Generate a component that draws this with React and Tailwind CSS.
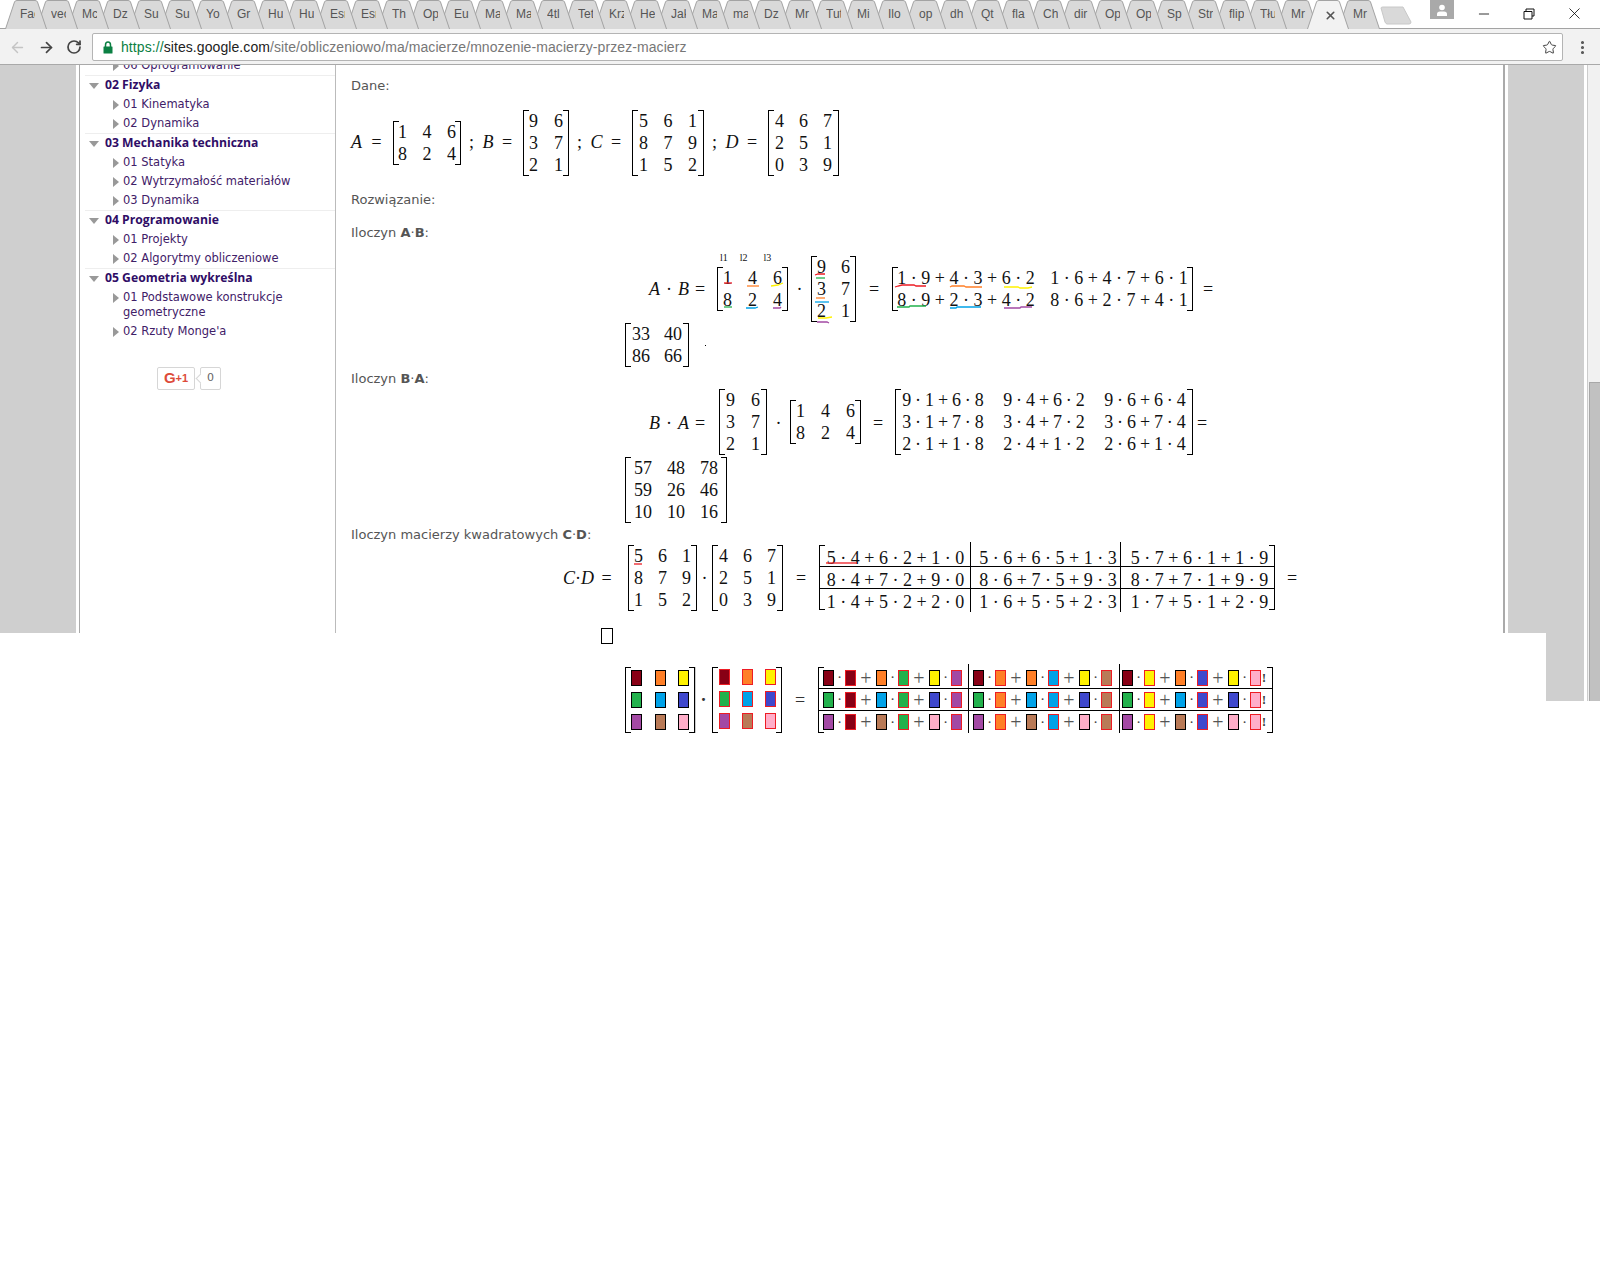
import { ArrowLeft, ArrowRight, EllipsisVertical, Minus, RotateCw, Star, X } from 'lucide-react'

const tabs = [
  'Fac', 'vec', 'Mc', 'Dz', 'Sul', 'Sul', 'Yo', 'Gr', 'Hu', 'Hu', 'Esr', 'Esr', 'Th', 'Op', 'Eul', 'Ma', 'Ma', '4tl', 'Tet', 'Krz', 'He', 'Jak',
  'Ma', 'ma', 'Dz', 'Mr', 'Tut', 'Mi', 'Ilo', 'op', 'dh', 'Qt', 'fla', 'Ch', 'dir', 'Op', 'Op', 'Sp', 'Str', 'flip', 'Tłu', 'Mr', '', 'Mr',
]

const menu = [
  { title: '02 Fizyka', items: ['01 Kinematyka', '02 Dynamika'] },
  { title: '03 Mechanika techniczna', items: ['01 Statyka', '02 Wytrzymałość materiałów', '03 Dynamika'] },
  { title: '04 Programowanie', items: ['01 Projekty', '02 Algorytmy obliczeniowe'] },
  { title: '05 Geometria wykreślna', items: ['01 Podstawowe konstrukcje geometryczne', "02 Rzuty Monge'a"] },
]

// paleta z Painta, ta sama dla obu macierzy
const palette = [
  ['bg-[#880015]', 'bg-[#ff7f27]', 'bg-[#fff200]'],
  ['bg-[#22b14c]', 'bg-[#00a2e8]', 'bg-[#3f48cc]'],
  ['bg-[#a349a4]', 'bg-[#b97a57]', 'bg-[#ffaec9]'],
]

const strokes = [
  ['#ed1c24', 'M724 283h8'],
  ['#ff7f27', 'M747 286h12'],
  ['#fff200', 'M771 286l7-1l5-2'],
  ['#22b14c', 'M724 307h8'],
  ['#00a2e8', 'M746 308h9l3-1'],
  ['#a349a4', 'M773 308h7l1-1'],
  ['#ed1c24', 'M815 275l3-1h7'],
  ['#22b14c', 'M816 278h9'],
  ['#ff7f27', 'M816 298h9'],
  ['#00a2e8', 'M815 302h14'],
  ['#fff200', 'M818 318h8l6-1'],
  ['#a349a4', 'M817 322h10l2 1'],
  ['#ed1c24', 'M895 287l3-1l4-1h12l2 1h10'],
  ['#ff7f27', 'M950 287l2-1h12l2 1h16'],
  ['#fff200', 'M1004 287h14l2 1h8l4-1'],
  ['#22b14c', 'M897 307h12l1-1h16'],
  ['#00a2e8', 'M950 308h6l1-1h24'],
  ['#a349a4', 'M1004 308h16l1-1h11'],
  ['#ed1c24', 'M826 563h31'],
  ['#ed1c24', 'M634 564h8'],
]

function Tab({ label, active }) {
  return (
    <div className={`relative h-[28px] w-[31px] flex-none ${active ? 'z-10' : ''}`}>
      <svg width="44" height="29" viewBox="0 0 44 29" className="absolute left-[-6px] top-0">
        <path
          d="M0.5 29L9.5 2Q10 0.5 12 0.5H30Q32 0.5 32.5 2L41.5 29"
          fill={active ? '#f2f2f2' : '#d9d9d9'}
          stroke="#a3a3a3"
        />
      </svg>
      {active ? (
        <X size={13} strokeWidth={3} className="absolute left-[11px] top-[9px] text-[#555]" />
      ) : (
        <span className="absolute left-[9px] top-[7px] w-[15px] overflow-hidden whitespace-nowrap font-['Liberation_Sans',sans-serif] text-[12px] leading-[15px] text-[#555]">
          {label}
        </span>
      )}
    </div>
  )
}

function Browser() {
  return (
    <div className="flex-none">
      <div className="relative flex h-[29px] border-b border-[#a3a3a3] bg-white">
        <div className="flex w-[1375px] flex-none flex-row-reverse">
          {tabs
            .map((t, i) => <Tab key={i} label={t} active={i === 42} />)
            .reverse()}
        </div>
        <svg width="32" height="20" viewBox="0 0 32 20" className="ml-[5px] mt-[6px] flex-none">
          <path d="M1 2Q1 1 3 1H23L31 16Q31 18 29 18H7Q6 18 5 16Z" fill="#d9d9d9" stroke="#c8c8c8" />
        </svg>
        <div className="ml-[18px] flex h-[19px] w-[24px] flex-none items-center justify-center bg-[#a9a9a9]">
          <svg width="12" height="12" viewBox="0 0 12 12" fill="#fff">
            <circle cx="6" cy="3.5" r="2.8" />
            <path d="M1 12V10Q1 7.5 4 7.5H8Q11 7.5 11 10V12Z" />
          </svg>
        </div>
        <Minus size={16} strokeWidth={1.2} className="ml-[22px] mt-[6px] flex-none text-black" />
        <svg width="12" height="12" viewBox="0 0 12 12" fill="none" stroke="#111" className="ml-[31px] mt-[8px] flex-none">
          <path d="M3 3V1H11V8H9M1 3.5H9V11H1Z" />
        </svg>
        <X size={19} strokeWidth={1} className="ml-[30px] mt-[4px] flex-none text-black" />
      </div>
      <div className="flex h-[36px] items-center border-b border-[#a9a9a9] bg-[#f2f2f2] pt-px">
        <ArrowLeft size={17} strokeWidth={2} className="ml-[9px] flex-none text-[#c4c4c4]" />
        <ArrowRight size={17} strokeWidth={2.4} className="ml-[12px] flex-none text-[#444]" />
        <RotateCw size={16} strokeWidth={2.6} className="ml-[11px] flex-none text-[#444]" />
        <div className="ml-[10px] flex h-[28px] w-[1471px] flex-none items-center rounded-[2px] border border-[#b4b4b4] bg-white pl-[10px]">
          <svg width="10" height="13" viewBox="0 0 10 13" className="flex-none">
            <path d="M2.5 6V4Q2.5 1 5 1T7.5 4V6" fill="none" stroke="#0b8043" strokeWidth="1.5" />
            <rect x="0.5" y="5.5" width="9" height="7" rx="0.5" fill="#0b8043" />
          </svg>
          <span className="ml-[8px] whitespace-nowrap font-['Liberation_Sans',sans-serif] text-[14px] tracking-[0.08px] text-[#777]">
            <span className="text-[#0b8043]">https://</span>
            <span className="text-[#222]">sites.google.com</span>/site/obliczeniowo/ma/macierze/mnozenie-macierzy-przez-macierz
          </span>
          <Star size={15} strokeWidth={1.6} className="ml-auto mr-[5px] flex-none text-[#444]" />
        </div>
        <EllipsisVertical size={17} strokeWidth={2.4} className="ml-[11px] flex-none text-[#555]" />
      </div>
    </div>
  )
}

function Sidebar() {
  return (
    <aside className="relative w-[257px] flex-none overflow-hidden border-x border-l-[#aaaaaa] border-r-[#bbbbbb] pl-[5px] font-['DejaVu_Sans',sans-serif] text-[11.5px]">
      <div className="-mt-[9px] flex h-[19px] items-center pl-[28px] text-[#3f2068]">
        <span className="mr-[4px] h-0 w-0 border-y-[5px] border-l-[6px] border-y-transparent border-l-[#999]" />
        06 Oprogramowanie
      </div>
      {menu.map((s) => (
        <div key={s.title} className="border-t border-[#eeeeee]">
          <div className="flex h-[19px] items-center pb-px font-['Open_Sans',sans-serif] text-[12.2px] font-bold text-[#2f0d66]">
            <span className="ml-[4px] mr-[6px] mt-px h-0 w-0 border-x-[5px] border-t-[6px] border-x-transparent border-t-[#999]" />
            {s.title}
          </div>
          {s.items.map((it) => (
            <div key={it} className="flex py-[2px] pl-[28px] pr-[36px] leading-[15px] text-[#3f2068]">
              <span className="mr-[4px] mt-[3px] h-0 w-0 flex-none border-y-[5px] border-l-[6px] border-y-transparent border-l-[#999]" />
              <span>{it}</span>
            </div>
          ))}
        </div>
      ))}
      <div className="mt-[26px] flex pl-[72px]">
        <div className="flex h-[23px] w-[38px] items-center justify-center rounded-[2px] border border-[#d6d6d6] bg-white font-['Liberation_Sans',sans-serif] text-[15px] font-bold text-[#dd4b39]">
          G<span className="text-[11px]">+1</span>
        </div>
        <div className="relative ml-[5px] flex h-[23px] w-[21px] items-center justify-center rounded-[2px] border border-[#d6d6d6] bg-white text-[11px] text-[#666]">
          <span className="absolute left-[-4px] top-[7px] h-[7px] w-[7px] rotate-45 border-b border-l border-[#d6d6d6] bg-white" />
          <span className="relative">0</span>
        </div>
      </div>
    </aside>
  )
}

function Bracket({ side, shadow }) {
  return (
    <span
      className={`w-[6px] flex-none border-y border-black ${
        side === 'l' ? 'border-l-[1.5px]' : 'border-r-[1.5px]'
      } ${shadow ? 'shadow-[1px_0_0_#cccccc]' : ''}`}
    />
  )
}

// zwykla macierz: rows to tablica wierszy, kazdy wiersz to tablica liczb
function Matrix({ rows, cell = 'w-[9px]', gap = 'gap-x-[16px]', pad = 'px-[1px]' }) {
  return (
    <div className="flex flex-none">
      <Bracket side="l" />
      <div className={`-mx-[1px] flex flex-col ${pad}`}>
        {rows.map((r, i) => (
          <div key={i} className={`flex h-[22px] items-center leading-[22px] ${gap}`}>
            {r.map((v, j) => (
              <span key={j} className={`text-center ${cell}`}>
                {v}
              </span>
            ))}
          </div>
        ))}
      </div>
      <Bracket side="r" />
    </div>
  )
}

function Line({ children }) {
  return (
    <div className="flex h-[20px] items-center pl-[15px] font-['DejaVu_Sans',sans-serif] text-[13px] text-[#555555]">
      <span>{children}</span>
    </div>
  )
}

function Eq({ children, className }) {
  return <div className={`flex items-center whitespace-nowrap ${className}`}>{children}</div>
}

function Label({ children, className }) {
  return <span className={`flex-none ${className}`}>{children}</span>
}

function Content() {
  return (
    <main className="w-[1167px] flex-none overflow-hidden pt-[11px] font-['Liberation_Serif',serif] text-[18px] text-[#111]">
      <Line>Dane:</Line>
      <Eq className="mt-[13px] h-[67px] pl-[15px]">
        <Label className="w-[42px] italic [word-spacing:4px]">A =</Label>
        <Matrix rows={[[1, 4, 6], [8, 2, 4]]} gap="gap-x-[15.5px]" pad="px-0" />
        <Label className="w-[62px] pr-[3px] text-center [word-spacing:4px]"><span>;</span> <i>B</i> =</Label>
        <Matrix rows={[[9, 6], [3, 7], [2, 1]]} pad="px-[1px]" />
        <Label className="w-[63px] pr-[3px] text-center [word-spacing:4px]"><span>;</span> <i>C</i> =</Label>
        <Matrix rows={[[5, 6, 1], [8, 7, 9], [1, 5, 2]]} gap="gap-x-[15.5px]" pad="px-[2px]" />
        <Label className="w-[64px] pr-[3px] text-center [word-spacing:4px]"><span>;</span> <i>D</i> =</Label>
        <Matrix rows={[[4, 6, 7], [2, 5, 1], [0, 3, 9]]} gap="gap-x-[15px]" pad="px-[2px]" />
      </Eq>
      <div className="mt-[14px]">
        <Line>Rozwiązanie:</Line>
      </div>
      <div className="mt-[13px]">
        <Line>
          Iloczyn <b>A</b>·<b>B</b>:
        </Line>
      </div>
      <div className="relative mt-[12px]">
        <Eq className="h-[67px] pl-[313px]">
          <Label className="w-[68px] pt-[2px] [word-spacing:1.5px]"><i>A</i> · <i>B</i> =</Label>
          <div className="relative">
            <Matrix rows={[[1, 4, 6], [8, 2, 4]]} pad="px-[1px]" />
            <div className="absolute left-[3px] top-[-15px] flex gap-x-[12px] text-[10px] leading-[12px]">
              <span>l1</span>
              <span>l2</span>
              <span className="ml-[4px]">l3</span>
            </div>
          </div>
          <span className="w-[23px] flex-none pt-[2px] text-center">·</span>
          <Matrix rows={[[9, 6], [3, 7], [2, 1]]} gap="gap-x-[15px]" />
          <span className="w-[36px] flex-none pt-[2px] text-center">=</span>
          <Matrix
            rows={[
              ['1 · 9 + 4 · 3 + 6 · 2', '1 · 6 + 4 · 7 + 6 · 1'],
              ['8 · 9 + 2 · 3 + 4 · 2', '8 · 6 + 2 · 7 + 4 · 1'],
            ]}
            cell="w-[138px]"
            gap="gap-x-[15px]"
            pad="px-0"
          />
          <span className="ml-[10px] pt-[2px]">=</span>
        </Eq>
        <svg width="1167" height="80" viewBox="336 255 1167 80" fill="none" className="absolute left-0 top-0">
          {strokes.slice(0, 18).map(([c, d], i) => (
            <path key={i} d={d} stroke={c} strokeWidth="1.3" />
          ))}
        </svg>
      </div>
      <Eq className="mt-[1px] h-[44px] pl-[289px]">
        <Matrix rows={[[33, 40], [86, 66]]} cell="w-[18px]" gap="gap-x-[14px]" pad="px-[2px]" />
        <span className="ml-[16px] h-px w-px bg-black" />
      </Eq>
      <div className="mt-[2px]">
        <Line>
          Iloczyn <b>B</b>·<b>A</b>:
        </Line>
      </div>
      <Eq className="h-[66px] pl-[313px]">
        <Label className="w-[70px] pt-[2px] [word-spacing:1.5px]"><i>B</i> · <i>A</i> =</Label>
        <Matrix rows={[[9, 6], [3, 7], [2, 1]]} pad="px-[2px]" />
        <span className="w-[23px] flex-none pt-[2px] text-center">·</span>
        <Matrix rows={[[1, 4, 6], [8, 2, 4]]} pad="px-[1px]" />
        <span className="w-[34px] flex-none pt-[2px] text-center">=</span>
        <Matrix
          rows={[
            ['9 · 1 + 6 · 8', '9 · 4 + 6 · 2', '9 · 6 + 6 · 4'],
            ['3 · 1 + 7 · 8', '3 · 4 + 7 · 2', '3 · 6 + 7 · 4'],
            ['2 · 1 + 1 · 8', '2 · 4 + 1 · 2', '2 · 6 + 1 · 4'],
          ]}
          cell="w-[82px] [word-spacing:-0.6px]"
          gap="gap-x-[19px]"
          pad="pl-[2px] pr-[2px]"
        />
        <span className="ml-[4px] pt-[2px]">=</span>
      </Eq>
      <Eq className="mt-[2px] h-[66px] pl-[289px]">
        <Matrix rows={[[57, 48, 78], [59, 26, 46], [10, 10, 16]]} cell="w-[18px]" gap="gap-x-[15px]" pad="px-[4px]" />
      </Eq>
      <div className="mt-[2px]">
        <Line>
          Iloczyn macierzy kwadratowych <b>C</b>·<b>D</b>:
        </Line>
      </div>
      <div className="relative -mt-px">
        <Eq className="h-[67px] pl-[227px]">
          <Label className="w-[65px] pt-[2px] [word-spacing:3px]"><i>C</i>·<i>D</i> =</Label>
          <Matrix rows={[[5, 6, 1], [8, 7, 9], [1, 5, 2]]} gap="gap-x-[15px]" pad="px-[1px]" />
          <span className="w-[15px] flex-none pt-[2px] text-center">·</span>
          <Matrix rows={[[4, 6, 7], [2, 5, 1], [0, 3, 9]]} gap="gap-x-[15px]" pad="px-[2px]" />
          <span className="w-[36px] flex-none pt-[2px] text-center">=</span>
          <div className="relative flex h-[65px] w-[456px] flex-none">
            <Bracket side="l" />
            <div className="-mx-[5px] flex flex-1 flex-col">
              {[
                ['5 · 4 + 6 · 2 + 1 · 0', '5 · 6 + 6 · 5 + 1 · 3', '5 · 7 + 6 · 1 + 1 · 9'],
                ['8 · 4 + 7 · 2 + 9 · 0', '8 · 6 + 7 · 5 + 9 · 3', '8 · 7 + 7 · 1 + 9 · 9'],
                ['1 · 4 + 5 · 2 + 2 · 0', '1 · 6 + 5 · 5 + 2 · 3', '1 · 7 + 5 · 1 + 2 · 9'],
              ].map((r, i) => (
                <div
                  key={i}
                  className={`grid h-[22px] grid-cols-[151px_150px_1fr] items-center pb-px text-center [&>*+*]:pl-[4px] ${
                    i < 2 ? 'border-b border-black' : ''
                  }`}
                >
                  {r.map((c) => (
                    <span key={c}>{c}</span>
                  ))}
                </div>
              ))}
            </div>
            <Bracket side="r" />
            <span className="absolute -bottom-[2px] -top-[3px] left-[151px] w-px bg-black" />
            <span className="absolute -bottom-[2px] -top-[3px] left-[301px] w-px bg-black" />
          </div>
          <span className="ml-[12px] pt-[2px]">=</span>
        </Eq>
        <svg width="1167" height="67" viewBox="336 544 1167 67" fill="none" className="absolute left-0 top-0">
          {strokes.slice(18).map(([c, d], i) => (
            <path key={i} d={d} stroke={c} strokeWidth="1.3" />
          ))}
        </svg>
      </div>
    </main>
  )
}

function Swatch({ color, red }) {
  return <span className={`h-[16px] w-[11px] flex-none border ${red ? 'border-[#ed1c24]' : 'border-black'} ${color}`} />
}

function Cross({ sign }) {
  return (
    <span className="flex h-[20px] w-[20px] flex-none items-center justify-center text-[20px] leading-[20px] text-[#555]">
      {sign}
    </span>
  )
}

function ColorMatrix({ red, shadow }) {
  return (
    <div className="flex h-[66px] w-[70px] flex-none">
      <Bracket side="l" />
      <div className={`-mx-[1px] flex flex-1 flex-col gap-y-[6px] ${red ? 'pl-[2px] pr-px pt-[2px]' : 'px-px pt-[3px]'}`}>
        {palette.map((row, i) => (
          <div key={i} className="flex justify-between">
            {row.map((c) => (
              <Swatch key={c} color={c} red={red} />
            ))}
          </div>
        ))}
      </div>
      <Bracket side="r" shadow={shadow} />
    </div>
  )
}

function ColorProduct() {
  return (
    <div className="relative flex h-[66px] w-[455px] flex-none">
      <Bracket side="l" />
      <div className="-mx-[6px] flex flex-1 flex-col">
        {palette.map((row, i) => (
          <div
            key={i}
            className={`grid h-[22px] grid-cols-[150px_149px_1fr] items-center pl-[5px] ${i < 2 ? 'border-b border-black' : ''}`}
          >
            {[0, 1, 2].map((j) => (
              <div key={j} className="flex items-center">
                {[0, 1, 2].map((k) => (
                  <div key={k} className="flex items-center">
                    {k > 0 && <Cross sign="+" />}
                    <Swatch color={row[k]} />
                    <span className="w-[11px] flex-none text-center text-[11px] font-bold leading-none text-[#444]">·</span>
                    <Swatch color={palette[k][j]} red />
                  </div>
                ))}
                {j === 2 && <span className="ml-[1px] text-[12px] font-bold leading-none text-[#333]">!</span>}
              </div>
            ))}
          </div>
        ))}
      </div>
      <Bracket side="r" />
      <span className="absolute -top-[3px] bottom-0 left-[150px] w-px bg-black" />
      <span className="absolute -top-[3px] bottom-0 left-[301px] w-px bg-black" />
    </div>
  )
}

export default function App() {
  return (
    <div className="flex h-[1268px] w-[1600px] flex-col overflow-hidden bg-white">
      <Browser />
      <div className="flex flex-none">
        <div className="w-[1546px] flex-none">
          <div className="flex h-[568px]">
            <div className="w-[76px] flex-none bg-[#cfcfcf]" />
            <div className="w-[3px] flex-none" />
            <Sidebar />
            <Content />
            <div className="w-[2px] flex-none bg-[#aaaaaa]" />
            <div className="w-[3px] flex-none" />
            <div className="flex-1 bg-[#cfcfcf]" />
          </div>
          <div className="relative flex h-[68px] items-start pl-[625px] pt-[34px] font-['Liberation_Serif',serif] text-[18px] text-[#333]">
            <span className="absolute left-[601px] top-[-5px] h-[16px] w-[12px] border border-black bg-white" />
            <ColorMatrix shadow />
            <span className="flex h-[66px] w-[17px] flex-none items-center justify-center font-bold">·</span>
            <ColorMatrix red />
            <span className="flex h-[66px] w-[36px] flex-none items-center justify-center">=</span>
            <ColorProduct />
          </div>
        </div>
        <div className="flex h-[636px] flex-1">
          <div className="w-[38px] flex-none bg-[#cfcfcf]" />
          <div className="w-[3px] flex-none" />
          <div className="flex flex-1 flex-col border-l border-[#cccccc] bg-[#f1f1f1] pl-px">
            <div className="h-[317px] flex-none" />
            <div className="flex-1 border-l border-t border-[#a8a8a8] bg-[#c1c1c1]" />
          </div>
        </div>
      </div>
    </div>
  )
}
